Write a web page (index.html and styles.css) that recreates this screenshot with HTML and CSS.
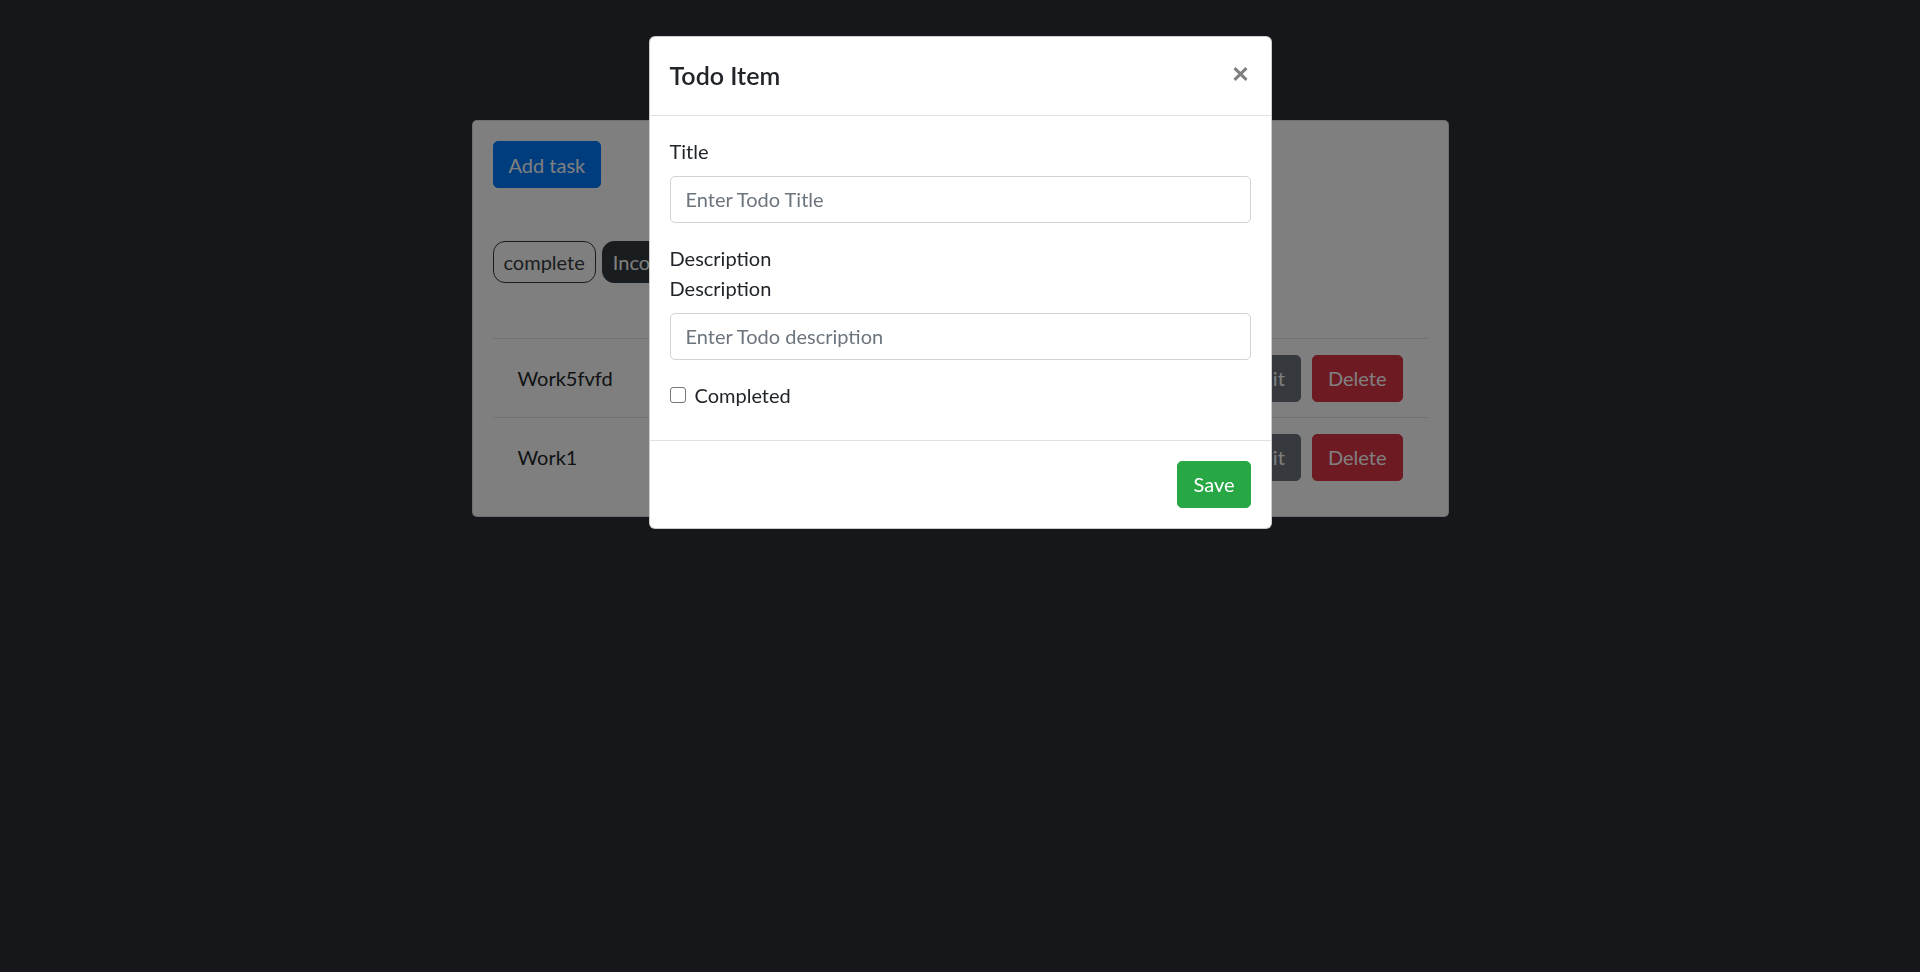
FILE: index.html
```html
<!DOCTYPE html>
<html lang="en">
<head>
<meta charset="utf-8">
<title>Todo</title>
<link rel="stylesheet" href="styles.css">
</head>
<body>
<main class="page">
  <section class="card">
    <button class="btn btn-primary">Add task</button>
    <div class="filters">
      <button class="btn btn-filter btn-outline-dark">complete</button>
      <button class="btn btn-filter btn-dark">Incomplete</button>
      <button class="btn btn-filter btn-outline-dark">All</button>
    </div>
    <table class="todo-table">
      <tbody>
        <tr>
          <td class="todo-title">Work5fvfd</td>
          <td class="todo-actions">
            <button class="btn btn-secondary">Edit</button>
            <button class="btn btn-danger">Delete</button>
          </td>
        </tr>
        <tr>
          <td class="todo-title">Work1</td>
          <td class="todo-actions">
            <button class="btn btn-secondary">Edit</button>
            <button class="btn btn-danger">Delete</button>
          </td>
        </tr>
      </tbody>
    </table>
  </section>
</main>

<div class="backdrop"></div>

<div class="modal">
  <div class="modal-content">
    <div class="modal-header">
      <h5 class="modal-title">Todo Item</h5>
      <button class="close" aria-label="Close">
        <svg width="15" height="14" viewBox="0 0 15 14"><path d="M1.5 1.2 L13.5 12.8 M13.5 1.2 L1.5 12.8" stroke="#7f7f7f" stroke-width="3" fill="none"/></svg>
      </button>
    </div>
    <div class="modal-body">
      <div class="form-group">
        <label class="label">Title</label>
        <input class="form-control" type="text" placeholder="Enter Todo Title">
      </div>
      <div class="form-group">
        <div class="label-plain">Description</div>
        <label class="label">Description</label>
        <input class="form-control" type="text" placeholder="Enter Todo description">
      </div>
      <label class="check-label"><input class="check" type="checkbox"><span>Completed</span></label>
    </div>
    <div class="modal-footer">
      <button class="btn btn-success">Save</button>
    </div>
  </div>
</div>
</body>
</html>
```

FILE: styles.css
```css
html, body {
  margin: 0;
  height: 100%;
}

body {
  background: #2c2e36;
  font-family: Lato, "Segoe UI", "Noto Sans", sans-serif;
  font-size: 20px;
  line-height: 30px;
  color: #212529;
}

.page {
  padding-top: 120px;
}

.card {
  box-sizing: border-box;
  width: 977px;
  margin: 0 auto;
  background: #fff;
  border: 1px solid rgba(0, 0, 0, 0.125);
  border-radius: 5px;
  padding: 20px;
}

.btn {
  display: inline-block;
  font-family: inherit;
  font-size: 20px;
  line-height: 30px;
  padding: 7.5px 15px;
  border: 1px solid transparent;
  border-radius: 5px;
  cursor: pointer;
}

.btn-primary {
  background: #007bff;
  border-color: #007bff;
  color: #fff;
}

.filters {
  margin-top: 53px;
  display: flex;
  gap: 6px;
}

.btn-filter {
  padding: 5px 10px;
  border-radius: 12px;
}

.btn-outline-dark {
  background: transparent;
  border-color: #343a40;
  color: #343a40;
}

.btn-dark {
  background: #343a40;
  border-color: #343a40;
  color: #fff;
}

.todo-table {
  margin-top: 55px;
  width: 100%;
  border-collapse: collapse;
}

.todo-table tr {
  border-top: 1px solid #dee2e6;
}

.todo-table td {
  padding: 15.6px 25px;
  vertical-align: middle;
}

.todo-actions {
  text-align: right;
}

.todo-actions .btn + .btn {
  margin-left: 6px;
}

.btn-secondary {
  background: #6c757d;
  border-color: #6c757d;
  color: #fff;
}

.btn-danger {
  background: #dc3545;
  border-color: #dc3545;
  color: #fff;
}

.btn-success {
  background: #28a745;
  border-color: #28a745;
  color: #fff;
}

.backdrop {
  position: fixed;
  inset: 0;
  background: rgba(0, 0, 0, 0.5);
}

.modal {
  position: fixed;
  inset: 0;
  display: flex;
  justify-content: center;
  align-items: flex-start;
  padding-top: 36px;
}

.modal-content {
  width: 623px;
  background: #fff;
  border: 1px solid rgba(0, 0, 0, 0.2);
  border-radius: 6px;
  box-sizing: border-box;
}

.modal-header {
  display: flex;
  align-items: flex-start;
  justify-content: space-between;
  padding: 20px;
  border-bottom: 1px solid #dee2e6;
}

.modal-title {
  margin: 0;
  font-size: 25px;
  line-height: 37.5px;
  font-weight: 600;
  color: #212529;
}

.close {
  background: none;
  border: 0;
  padding: 0;
  margin: 10px 3px 0 0;
  display: flex;
  cursor: pointer;
}

.modal-body {
  padding: 20px;
}

.form-group {
  margin-bottom: 20px;
}

.label {
  display: block;
  margin-bottom: 10px;
}

.form-control {
  display: block;
  box-sizing: border-box;
  width: 100%;
  height: 47px;
  padding: 7.5px 15px;
  font-family: inherit;
  font-size: 20px;
  line-height: 30px;
  color: #495057;
  background: #fff;
  border: 1px solid #ced4da;
  border-radius: 5px;
}

.form-control::placeholder {
  color: #6c757d;
}

.check-label {
  display: flex;
  align-items: center;
  margin-bottom: 10px;
}

.check {
  appearance: none;
  width: 16px;
  height: 16px;
  margin: 0 9px 0 0;
  border: 1px solid #767676;
  border-radius: 3px;
  background: #fff;
}

.modal-footer {
  display: flex;
  justify-content: flex-end;
  padding: 15px;
  border-top: 1px solid #dee2e6;
}

.modal-footer .btn {
  margin: 5px;
}
```
